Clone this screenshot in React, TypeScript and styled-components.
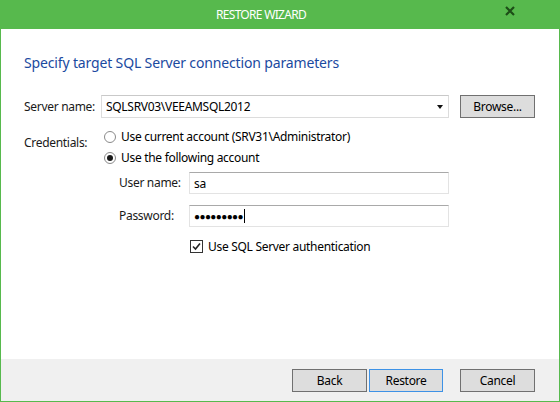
import React from "react"
import styled, { createGlobalStyle } from "styled-components"

const GlobalStyle = createGlobalStyle`
  html, body {
    margin: 0;
    padding: 0;
    background: #ffffff;
  }
  body {
    font-family: "Noto Sans", "Open Sans", sans-serif;
    font-size: 12px;
    letter-spacing: -0.3px;
    color: #000;
  }
`

const Window = styled.div`
  width: 560px;
  height: 402px;
  box-sizing: border-box;
  display: flex;
  flex-direction: column;
  border: 1px solid #57b94d;
  border-top: none;
  background: #fff;
`

const TitleBar = styled.div`
  height: 29px;
  flex-shrink: 0;
  background: #57b94d;
  margin: 0 -1px;
  padding-right: 38px;
  display: flex;
  align-items: center;
  justify-content: center;
  position: relative;
  color: #fff;
  font-size: 12px;
  letter-spacing: -0.7px;
`

const CloseButton = styled.div`
  position: absolute;
  right: 45px;
  top: 6px;
  width: 10px;
  height: 10px;
  display: flex;
`

const Body = styled.div`
  flex: 1;
  padding: 24px 23px 0 23px;
  display: flex;
  flex-direction: column;
`

const Heading = styled.h1`
  margin: 0 0 22px 0;
  font-weight: 400;
  font-size: 14px;
  letter-spacing: -0.15px;
  color: #1b4aa0;
  line-height: 20px;
`

const FormGrid = styled.div`
  display: grid;
  grid-template-columns: 77px 1fr;
  row-gap: 8px;
  align-items: start;
`

const Label = styled.div<{ $top?: number; $h?: number }>`
  line-height: ${(p) => p.$h ?? 23}px;
  padding-top: ${(p) => p.$top ?? 0}px;
  color: #1a1a1a;
  white-space: nowrap;
`

const ServerRow = styled.div`
  display: flex;
  gap: 11px;
`

const Combo = styled.div`
  width: 348px;
  height: 23px;
  box-sizing: border-box;
  border: 1px solid #dcdcdc;
  border-top-color: #c9c9c9;
  display: flex;
  align-items: center;
  justify-content: space-between;
  padding: 0 5px 0 4px;
`

const ComboArrow = styled.div`
  width: 0;
  height: 0;
  border-left: 3.5px solid transparent;
  border-right: 3.5px solid transparent;
  border-top: 4px solid #111;
`

const Button = styled.div<{ $primary?: boolean; $w?: number }>`
  width: ${(p) => p.$w ?? 75}px;
  height: 23px;
  box-sizing: border-box;
  border: 1px solid ${(p) => (p.$primary ? "#3d92e6" : "#707070")};
  background: #dddddd;
  display: flex;
  align-items: center;
  justify-content: center;
  color: #000;
`

const Credentials = styled.div`
  display: flex;
  flex-direction: column;
  padding-left: 3px;
`

const RadioRow = styled.div`
  display: flex;
  align-items: center;
  gap: 5px;
  height: 21px;
`

const Radio = styled.span<{ $checked?: boolean }>`
  width: 12px;
  height: 12px;
  box-sizing: border-box;
  border-radius: 50%;
  border: 1px solid #8a8a8a;
  background: #fff;
  display: flex;
  align-items: center;
  justify-content: center;
  &::after {
    content: "";
    display: ${(p) => (p.$checked ? "block" : "none")};
    width: 6px;
    height: 6px;
    border-radius: 50%;
    background: #1a1a1a;
  }
`

const AccountFields = styled.div`
  display: grid;
  grid-template-columns: 70px 260px;
  row-gap: 11px;
  margin: 4px 0 0 15px;
  align-items: center;
`

const Field = styled.div`
  height: 22px;
  box-sizing: border-box;
  border: 1px solid #e3e3e3;
  border-top-color: #a9a9a9;
  display: flex;
  align-items: center;
  padding: 0 4px;
`

const Dots = styled.span`
  font-size: 10px;
  letter-spacing: -0.6px;
`

const Caret = styled.span`
  display: inline-block;
  width: 1px;
  height: 14px;
  background: #000;
  margin-left: 1px;
`

const CheckRow = styled.div`
  grid-column: 2;
  display: flex;
  align-items: center;
  gap: 5px;
  margin-left: 1px;
`

const CheckBox = styled.span`
  width: 13px;
  height: 13px;
  box-sizing: border-box;
  border: 1px solid #333;
  background: #fff;
  display: flex;
  align-items: center;
  justify-content: center;
`

const Footer = styled.div`
  height: 42px;
  flex-shrink: 0;
  background: #f0f0f0;
  display: flex;
  align-items: flex-start;
  justify-content: flex-end;
  padding: 10px 24px 0 0;
  box-sizing: border-box;
`

const ButtonGroup = styled.div`
  display: flex;
  gap: 2px;
  margin-right: 17px;
`

export default function App() {
  return (
    <>
      <GlobalStyle />
      <Window>
        <TitleBar>
          RESTORE WIZARD
          <CloseButton>
            <svg width="10" height="10" viewBox="0 0 10 10">
              <path d="M1 1 L9 9 M9 1 L1 9" stroke="#1d4d17" strokeWidth="2.2" />
            </svg>
          </CloseButton>
        </TitleBar>
        <Body>
          <Heading>Specify target SQL Server connection parameters</Heading>
          <FormGrid>
            <Label>Server name:</Label>
            <ServerRow>
              <Combo>
                <span>SQLSRV03\VEEAMSQL2012</span>
                <ComboArrow />
              </Combo>
              <Button>Browse...</Button>
            </ServerRow>
            <Label $top={5}>Credentials:</Label>
            <Credentials>
              <RadioRow>
                <Radio />
                Use current account (SRV31\Administrator)
              </RadioRow>
              <RadioRow>
                <Radio $checked />
                Use the following account
              </RadioRow>
              <AccountFields>
                <Label $h={22}>User name:</Label>
                <Field>sa</Field>
                <Label $h={22}>Password:</Label>
                <Field>
                  <Dots>●●●●●●●●●</Dots>
                  <Caret />
                </Field>
                <CheckRow>
                  <CheckBox>
                    <svg width="9" height="9" viewBox="0 0 9 9">
                      <path d="M1 4.5 L3.5 7 L8 1.5" stroke="#222" strokeWidth="1.6" fill="none" />
                    </svg>
                  </CheckBox>
                  Use SQL Server authentication
                </CheckRow>
              </AccountFields>
            </Credentials>
          </FormGrid>
        </Body>
        <Footer>
          <ButtonGroup>
            <Button>Back</Button>
            <Button $primary $w={74}>Restore</Button>
          </ButtonGroup>
          <Button>Cancel</Button>
        </Footer>
      </Window>
    </>
  )
}
